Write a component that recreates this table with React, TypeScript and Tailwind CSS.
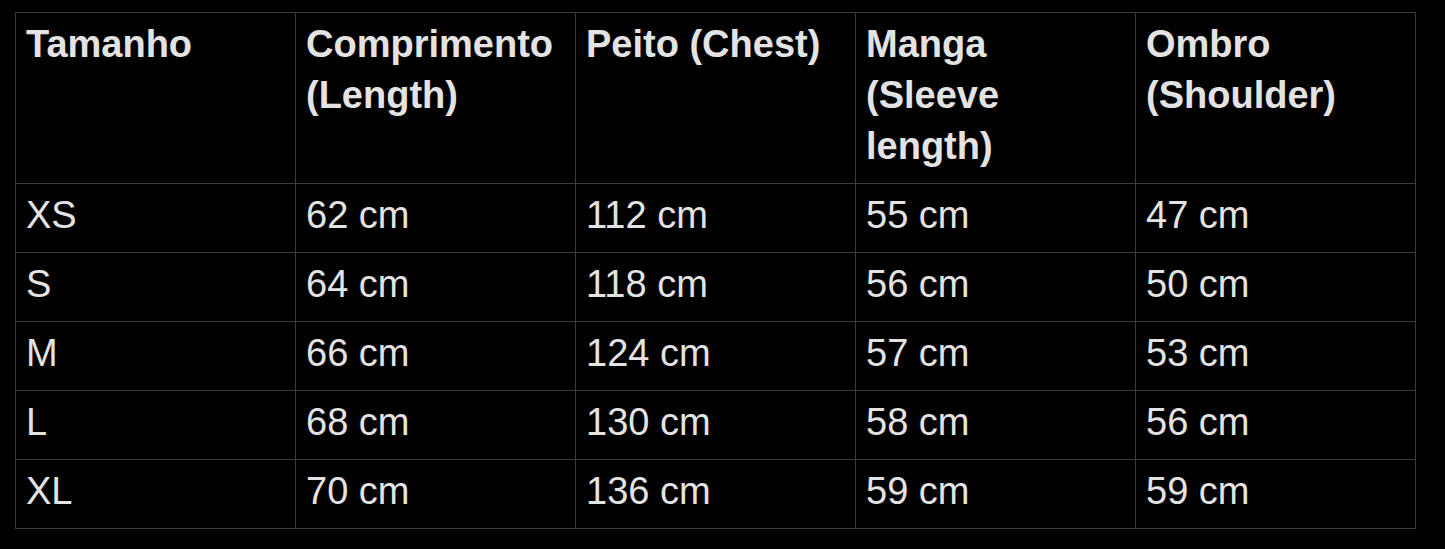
const headers = [
  ["Tamanho"],
  ["Comprimento", "(Length)"],
  ["Peito (Chest)"],
  ["Manga", "(Sleeve", "length)"],
  ["Ombro", "(Shoulder)"],
];

const rows = [
  ["XS", "62 cm", "112 cm", "55 cm", "47 cm"],
  ["S", "64 cm", "118 cm", "56 cm", "50 cm"],
  ["M", "66 cm", "124 cm", "57 cm", "53 cm"],
  ["L", "68 cm", "130 cm", "58 cm", "56 cm"],
  ["XL", "70 cm", "136 cm", "59 cm", "59 cm"],
];

export default function App() {
  return (
    <div className="min-h-[549px] w-[1445px] bg-black pl-[15px] pt-[12px] font-['Liberation_Sans',Arial,sans-serif] text-[38px] leading-[51px] text-[#e3e3e3]">
      <table className="w-[1401px] table-fixed border-collapse">
        <thead>
          <tr>
            {headers.map((lines, i) => (
              <th
                key={i}
                className="w-[280px] border border-[#3b3b3b] px-[10px] pt-[6px] pb-[11px] text-left align-top font-bold"
              >
                {lines.map((line, j) => (
                  <div key={j}>{line}</div>
                ))}
              </th>
            ))}
          </tr>
        </thead>
        <tbody>
          {rows.map((row) => (
            <tr key={row[0]}>
              {row.map((cell, i) => (
                <td key={i} className="border border-[#3b3b3b] px-[10px] pt-[6px] pb-[11px] align-top">
                  {cell}
                </td>
              ))}
            </tr>
          ))}
        </tbody>
      </table>
    </div>
  );
}
